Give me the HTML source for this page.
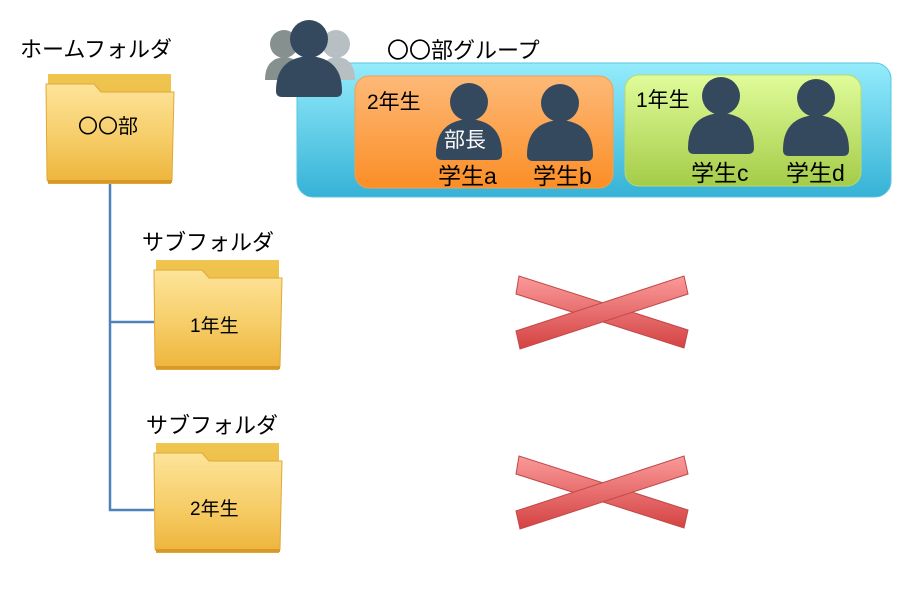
<!DOCTYPE html>
<html><head><meta charset="utf-8"><style>
html,body{margin:0;padding:0;background:#fff;}
body{width:922px;height:605px;position:relative;overflow:hidden;font-family:"Liberation Sans","Noto Sans CJK JP",sans-serif;color:#000;}
.t{position:absolute;white-space:nowrap;}
</style></head><body>
<svg width="922" height="605" style="position:absolute;left:0;top:0">
<defs>
<linearGradient id="fb" x1="0" y1="0" x2="0" y2="1"><stop offset="0" stop-color="#f0c650"/><stop offset="1" stop-color="#e0a830"/></linearGradient>
<linearGradient id="ff" x1="0" y1="0" x2="0" y2="1"><stop offset="0" stop-color="#fde49a"/><stop offset="0.55" stop-color="#f6cd68"/><stop offset="1" stop-color="#eeb53c"/></linearGradient>
<linearGradient id="gb" x1="0" y1="0" x2="0" y2="1"><stop offset="0" stop-color="#94ecfc"/><stop offset="1" stop-color="#36b2d6"/></linearGradient>
<linearGradient id="go" x1="0" y1="0" x2="0" y2="1"><stop offset="0" stop-color="#fdb978"/><stop offset="1" stop-color="#fb8e26"/></linearGradient>
<linearGradient id="gg" x1="0" y1="0" x2="0" y2="1"><stop offset="0" stop-color="#e0fc9a"/><stop offset="1" stop-color="#a4cc48"/></linearGradient>
<linearGradient id="gr1" gradientUnits="userSpaceOnUse" x1="0" y1="276" x2="0" y2="349"><stop offset="0" stop-color="#fb9a9a"/><stop offset="1" stop-color="#d44242"/></linearGradient>
<linearGradient id="gr2" gradientUnits="userSpaceOnUse" x1="0" y1="456" x2="0" y2="529"><stop offset="0" stop-color="#fb9a9a"/><stop offset="1" stop-color="#d44242"/></linearGradient>
<g id="fold">
<path d="M2,0 H125 V110 H2 Z" fill="url(#fb)"/>
<path d="M0,10 H48 L55,18 H128 L126,106 Q126,108 123,108 H4 Q1,108 1,105 Z" fill="url(#ff)" stroke="#e0a838" stroke-width="1"/>
<rect x="2" y="106" width="124" height="3" fill="#d8982a"/>
</g>
<g id="p"><circle cx="33" cy="20" r="19" fill="#34495e"/><path d="M0,72 Q0,39 33,37 Q66,39 66,72 Q66,78 60,78 H6 Q0,78 0,72 Z" fill="#34495e"/></g>
</defs>
<path d="M110,182 V510 H154 M110,322 H154" stroke="#4f81bd" stroke-width="2.5" fill="none"/>
<use href="#fold" x="46" y="74"/>
<use href="#fold" x="154" y="260"/>
<use href="#fold" x="154" y="443"/>
<rect x="297" y="63" width="594" height="134" rx="16" fill="url(#gb)" stroke="#5bc3e0"/>
<rect x="355" y="76" width="258" height="112" rx="14" fill="url(#go)" stroke="#f0a050"/>
<rect x="625" y="75" width="236" height="111" rx="14" fill="url(#gg)" stroke="#b8d870"/>
<circle cx="284" cy="44" r="14" fill="#86908f"/><path d="M265,80 Q265,58 285,57 Q302,58 302,80 Z" fill="#86908f"/>
<circle cx="336" cy="44" r="14" fill="#b8bfc2"/><path d="M318,80 Q320,58 337,57 Q355,58 355,80 Z" fill="#b8bfc2"/>
<use href="#p" x="276" y="19"/>
<use href="#p" x="436" y="82"/>
<use href="#p" x="527" y="83"/>
<use href="#p" x="688" y="76"/>
<use href="#p" x="783" y="78"/>
<g stroke="#c04848" stroke-width="1">
<polygon fill="url(#gr1)" points="519,276 516,294 684,348 688,330"/>
<polygon fill="url(#gr1)" points="684,276 688,294 520,349 516,331"/>
<polygon fill="url(#gr2)" points="519,456 516,474 684,528 688,510"/>
<polygon fill="url(#gr2)" points="684,456 688,474 520,529 516,511"/>
</g>
</svg>
<div class="t" style="left:20px;top:32px;font-size:22px;">ホームフォルダ</div>
<div class="t" style="left:78px;top:110px;font-size:20px;">〇〇部</div>
<div class="t" style="left:142px;top:225px;font-size:22px;">サブフォルダ</div>
<div class="t" style="left:190px;top:311px;font-size:19px;">1年生</div>
<div class="t" style="left:146px;top:408px;font-size:22px;">サブフォルダ</div>
<div class="t" style="left:190px;top:494px;font-size:19px;">2年生</div>
<div class="t" style="left:387px;top:33px;font-size:22px;">〇〇部グループ</div>
<div class="t" style="left:367px;top:86px;font-size:21px;">2年生</div>
<div class="t" style="left:636px;top:84px;font-size:21px;">1年生</div>
<div class="t" style="left:444px;top:124px;font-size:21px;color:#fff;">部長</div>
<div class="t" style="left:438px;top:157px;font-size:23px;">学生a</div>
<div class="t" style="left:533px;top:157px;font-size:23px;">学生b</div>
<div class="t" style="left:691px;top:154px;font-size:23px;">学生c</div>
<div class="t" style="left:786px;top:154px;font-size:23px;">学生d</div>
</body></html>
